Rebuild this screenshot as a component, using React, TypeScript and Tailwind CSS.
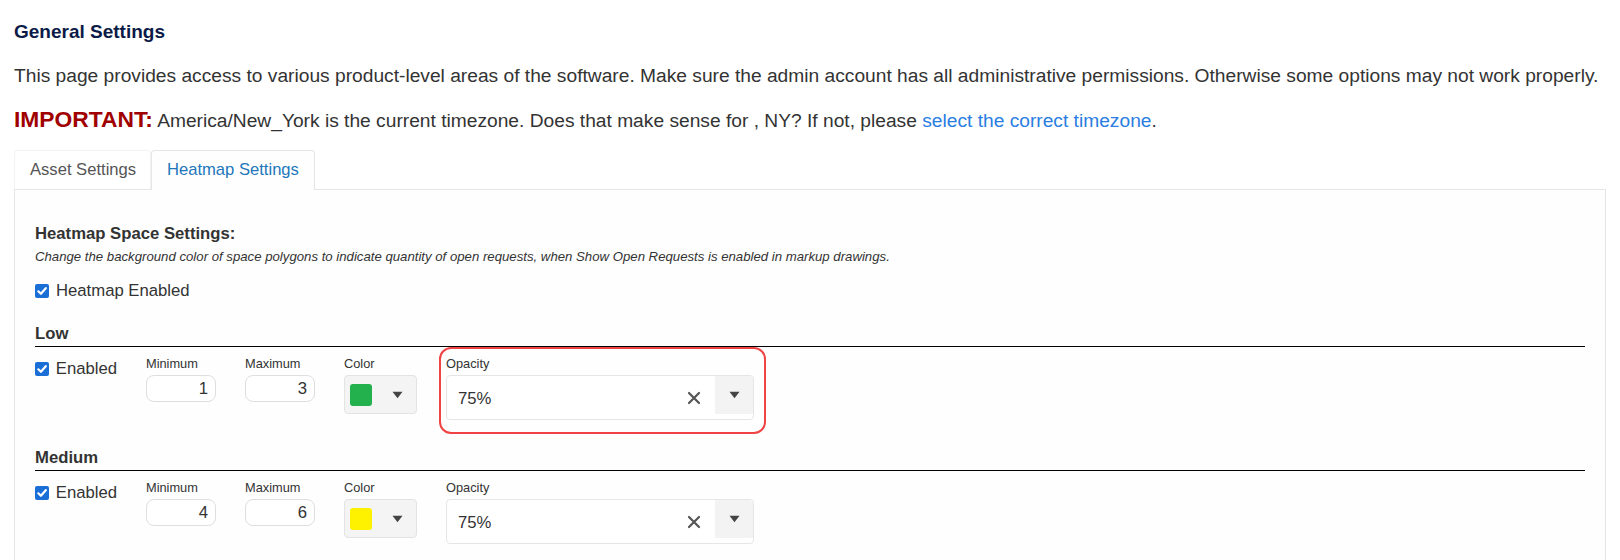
import React from "react";

const font = { fontFamily: '"Liberation Sans", Arial, sans-serif' };

function Check({ label, size = "text-[16.7px]" }: { label: string; size?: string }) {
  return (
    <div className="flex items-center gap-[7px]">
      <span className="flex h-[14px] w-[14px] items-center justify-center rounded-[2px] bg-[#1a6fd6]">
        <svg width="12" height="12" viewBox="0 0 12 12">
          <path d="M2.3 6.3 L4.9 8.8 L9.8 3.2" fill="none" stroke="#fff" strokeWidth="2.2" strokeLinecap="round" strokeLinejoin="round" />
        </svg>
      </span>
      <span className={`${size} leading-[24px] text-[#333]`}>{label}</span>
    </div>
  );
}

function Caret() {
  return (
    <svg width="11" height="8" viewBox="0 0 11 8">
      <path d="M0.5 0.8 L10.5 0.8 L5.5 7.2 Z" fill="#444" />
    </svg>
  );
}

function NumberField({ label, value }: { label: string; value: string }) {
  return (
    <div className="flex w-[70px] flex-col">
      <span className="text-[12.8px] leading-[16px] text-[#333]">{label}</span>
      <div className="mt-[3px] flex h-[27px] items-center justify-end rounded-[8px] border border-[#dedede] bg-white pr-[7px] text-[16.7px] text-[#333]">
        {value}
      </div>
    </div>
  );
}

function ColorField({ color }: { color: string }) {
  return (
    <div className="flex w-[73px] flex-col">
      <span className="text-[12.8px] leading-[16px] text-[#333]">Color</span>
      <div className="mt-[3px] flex h-[39px] items-center rounded-[4px] border border-[#e3e3e3] bg-[#f4f4f4] pl-[5px]">
        <span className="h-[22px] w-[22px] rounded-[3px]" style={{ backgroundColor: color }} />
        <span className="ml-[20px] flex items-center">
          <Caret />
        </span>
      </div>
    </div>
  );
}

function OpacityField({ highlight }: { highlight?: boolean }) {
  return (
    <div className="relative flex w-[308px] flex-col">
      {highlight && (
        <div className="pointer-events-none absolute -bottom-[14px] -left-[7px] -right-[12px] -top-[9px] rounded-[12px] border-2 border-[#f04444]" />
      )}
      <span className="text-[12.8px] leading-[16px] text-[#333]">Opacity</span>
      <div className="relative mt-[3px] flex h-[45px] items-center rounded-[4px] border border-[#e6e6e6] bg-white pl-[11px] text-[16.7px] text-[#333]">
        <span className="mt-[2px]">75%</span>
        <span className="absolute right-[52px] top-[15px]">
          <svg width="14" height="14" viewBox="0 0 14 14">
            <path d="M2 2 L12 12 M12 2 L2 12" stroke="#555" strokeWidth="2.2" strokeLinecap="round" />
          </svg>
        </span>
        <span className="absolute right-0 top-0 flex h-[38px] w-[38px] items-center justify-center rounded-tr-[4px] bg-[#f3f3f3]">
          <Caret />
        </span>
      </div>
    </div>
  );
}

function Level({ name, min, max, color, highlight }: { name: string; min: string; max: string; color: string; highlight?: boolean }) {
  return (
    <div>
      <div className="border-b border-black text-[16.7px] font-bold leading-[24px] text-[#333]">{name}</div>
      <div className="mt-[9px] flex gap-[29px]">
        <div className="w-[82px] pt-[1px]">
          <Check label="Enabled" />
        </div>
        <NumberField label="Minimum" value={min} />
        <NumberField label="Maximum" value={max} />
        <ColorField color={color} />
        <OpacityField highlight={highlight} />
      </div>
    </div>
  );
}

export default function App() {
  return (
    <div className="h-[560px] overflow-hidden bg-white px-[14px] pt-[20px]" style={font}>
      <h2 className="text-[19px] font-bold leading-[24px] text-[#0b1a47]">General Settings</h2>
      <p className="mt-[19px] text-[19.2px] leading-[26px] text-[#333]">
        This page provides access to various product-level areas of the software. Make sure the admin account has all administrative permissions. Otherwise some options may not work properly.
      </p>
      <p className="mt-[15px] text-[19.2px] leading-[30px] text-[#333]">
        <span className="text-[22.8px] font-bold text-[#a00000]">IMPORTANT:</span> America/New_York is the current timezone. Does that make sense for , NY? If not, please{" "}
        <a className="text-[#2a7de1]">select the correct timezone</a>.
      </p>
      <div className="mt-[14px] flex">
        <div className="flex h-[39px] w-[137px] items-center rounded-t-[4px] border border-b-0 border-[#f3f3f3] pl-[15px] text-[16.6px] text-[#555]">
          Asset Settings
        </div>
        <div className="relative -mb-px flex h-[40px] w-[164px] items-center rounded-t-[4px] border border-b-0 border-[#e6e6e6] bg-[#fefefe] pl-[15px] text-[16.6px] text-[#2277bb]">
          Heatmap Settings
        </div>
      </div>
      <div className="h-[400px] border border-[#e6e6e6] bg-[#fefefe] px-[20px] pt-[32px]">
        <div className="text-[16.7px] font-bold leading-[24px] text-[#333]">Heatmap Space Settings:</div>
        <div className="mt-[2px] text-[13.2px] italic leading-[18px] text-[#333]">
          Change the background color of space polygons to indicate quantity of open requests, when Show Open Requests is enabled in markup drawings.
        </div>
        <div className="mt-[13px]">
          <Check label="Heatmap Enabled" />
        </div>
        <div className="mt-[19px]">
          <Level name="Low" min="1" max="3" color="#22b14c" highlight />
        </div>
        <div className="mt-[26px]">
          <Level name="Medium" min="4" max="6" color="#fff200" />
        </div>
      </div>
    </div>
  );
}
